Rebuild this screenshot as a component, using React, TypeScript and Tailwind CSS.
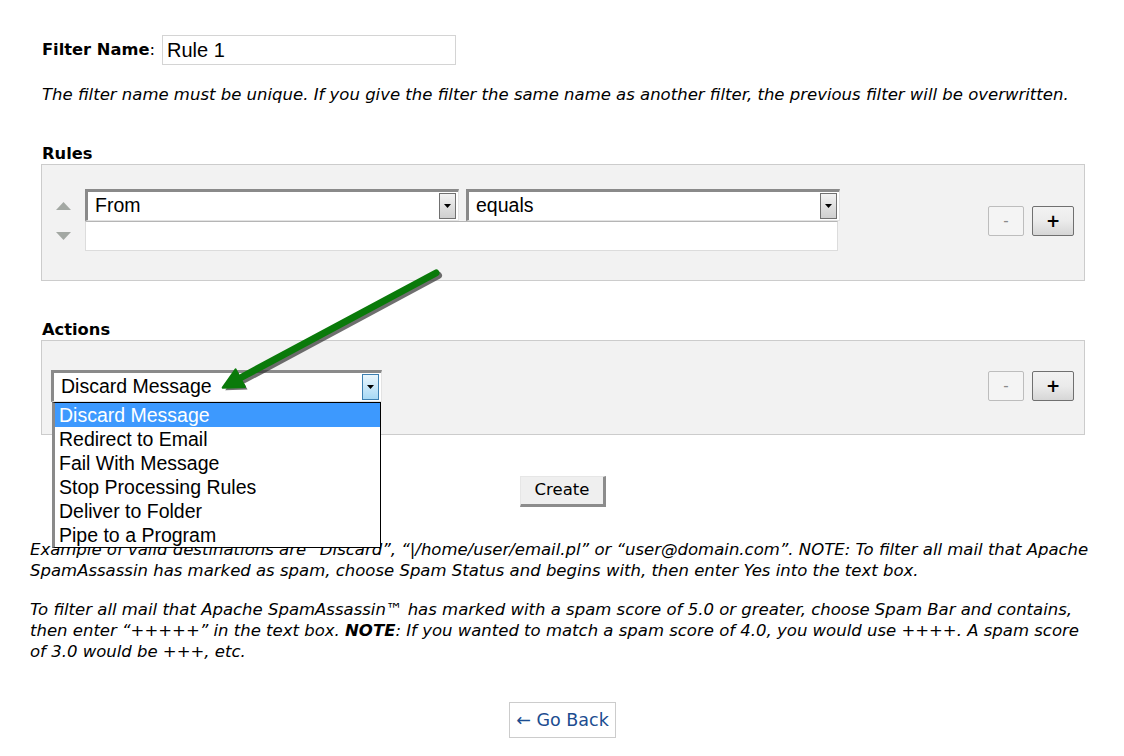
import React from 'react';

const verdana = { fontFamily: '"DejaVu Sans", Verdana, sans-serif' };
const arial = { fontFamily: '"Liberation Sans", Arial, sans-serif' };

function DropButton({ active }: { active?: boolean }) {
  return (
    <div
      className={
        active
          ? 'w-[17px] h-[26px] border border-[#3c7fb1] bg-gradient-to-b from-[#eaf6fd] to-[#a7d9f5] flex items-center justify-center'
          : 'w-[17px] h-[26px] border border-[#707070] bg-gradient-to-b from-[#f2f2f2] to-[#cfcfcf] flex items-center justify-center'
      }
    >
      <svg width="7" height="4" viewBox="0 0 7 4">
        <path d="M0 0 L7 0 L3.5 4 Z" fill="#000" />
      </svg>
    </div>
  );
}

function FakeSelect({ value, width, active }: { value: string; width: string; active?: boolean }) {
  return (
    <div
      className={`${width} h-[32px] bg-white border-t-[3px] border-l-[3px] border-r border-b border-t-[#8a8a8a] border-l-[#8a8a8a] border-r-[#e3e3e3] border-b-[#e3e3e3] flex items-center justify-between pl-[7px] pr-[2px]`}
    >
      <span className="text-[19.5px] text-black" style={arial}>
        {value}
      </span>
      <DropButton active={active} />
    </div>
  );
}

function PlusMinus() {
  return (
    <div className="flex gap-2">
      <button className="w-[36px] h-[30px] border border-[#bdbdbd] rounded-[2px] bg-[#f4f4f4] text-[#8a8a8a] text-[15px] leading-none">
        -
      </button>
      <button className="w-[42px] h-[30px] border border-[#707070] rounded-[2px] bg-gradient-to-b from-[#f2f2f2] via-[#ebebeb] to-[#d6d6d6] text-black text-[17px] font-bold leading-none">
        +
      </button>
    </div>
  );
}

export default function App() {
  const options = [
    'Discard Message',
    'Redirect to Email',
    'Fail With Message',
    'Stop Processing Rules',
    'Deliver to Folder',
    'Pipe to a Program',
  ];

  return (
    <div className="relative w-[1124px] h-[756px] bg-white text-[16.5px] text-black overflow-hidden" style={verdana}>
      <div className="pt-[35px] pl-[41px] w-[1085px]">
        <div className="flex items-center">
          <span className="font-bold ml-[1px] text-[16.3px]">Filter Name</span>
          <span>:</span>
          <div
            className="ml-[7px] w-[294px] h-[30px] border border-[#d4d4d4] bg-white flex items-center pl-[4px] text-[20px]"
            style={arial}
          >
            Rule 1
          </div>
        </div>

        <p className="mt-[19px] ml-[1px] italic leading-[21px]">
          The filter name must be unique. If you give the filter the same name as another filter, the previous filter will be overwritten.
        </p>

        <h3 className="mt-[38px] ml-[1px] font-bold leading-[21px] text-[16.3px]">Rules</h3>
        <div className="h-[117px] w-[1044px] bg-[#f2f2f2] border border-[#cccccc] flex items-start justify-between pt-[24px] pl-[13px] pr-[10px]">
          <div className="flex items-start">
            <div className="flex flex-col items-center w-[16px] mt-[13px] gap-[22px]">
              <svg width="15" height="8" viewBox="0 0 15 8">
                <path d="M0 8 L7.5 0 L15 8 Z" fill="#a3a8a3" />
              </svg>
              <svg width="15" height="8" viewBox="0 0 15 8">
                <path d="M0 0 L15 0 L7.5 8 Z" fill="#a3a8a3" />
              </svg>
            </div>
            <div className="ml-[14px] flex flex-col">
              <div className="flex gap-[7px]">
                <FakeSelect value="From" width="w-[374px]" />
                <FakeSelect value="equals" width="w-[374px]" />
              </div>
              <div className="w-[753px] h-[30px] bg-white border border-[#dcdcdc] border-t-[#b5b5b5]" />
            </div>
          </div>
          <div className="mt-[17px]">
            <PlusMinus />
          </div>
        </div>

        <h3 className="mt-[38px] ml-[1px] font-bold leading-[21px] text-[16.3px]">Actions</h3>
        <div className="relative h-[95px] w-[1044px] bg-[#f2f2f2] border border-[#cccccc] flex items-start justify-between pt-[29px] pl-[9px] pr-[10px]">
          <div className="relative">
            <FakeSelect value="Discard Message" width="w-[331px]" active />
            <div
              className="absolute left-[1px] top-[32px] w-[329px] bg-white border border-black border-l-[3px] border-l-[#8a8a8a] z-10"
              style={arial}
            >
              {options.map((o, i) => (
                <div
                  key={o}
                  className={
                    i === 0
                      ? 'h-[24px] leading-[25px] pl-[4px] text-[19.5px] bg-[#3d99fe] text-white'
                      : 'h-[24px] leading-[25px] pl-[4px] text-[19.5px] text-black'
                  }
                >
                  {o}
                </div>
              ))}
            </div>
          </div>
          <div className="mt-[1px]">
            <PlusMinus />
          </div>
        </div>
      </div>

      <div className="flex justify-center mt-[41px]">
        <button className="w-[86px] h-[31px] bg-[#efefef] border-t border-l border-t-[#e6e6e6] border-l-[#e6e6e6] border-r-[3px] border-b-[3px] border-r-[#8c8c8c] border-b-[#8c8c8c] text-[16.5px] ml-[2px]">
          Create
        </button>
      </div>

      <div className="pl-[30px] italic leading-[21px]">
        <p className="mt-[32px]">
          Example of valid destinations are “Discard”, “|/home/user/email.pl” or “user@domain.com”. NOTE: To filter all mail that Apache
          <br />
          SpamAssassin has marked as spam, choose Spam Status and begins with, then enter Yes into the text box.
        </p>
        <p className="mt-[18px]">
          To filter all mail that Apache SpamAssassin™ has marked with a spam score of 5.0 or greater, choose Spam Bar and contains,
          <br />
          then enter “+++++” in the text box. <b>NOTE</b>: If you wanted to match a spam score of 4.0, you would use ++++. A spam score
          <br />
          of 3.0 would be +++, etc.
        </p>
      </div>

      <div className="flex justify-center mt-[40px]">
        <button className="w-[107px] h-[36px] border border-[#cccccc] bg-white text-[#1c4d90] text-[17.5px] ml-[1px]">
          ← Go Back
        </button>
      </div>

      <svg className="absolute left-0 top-0 pointer-events-none z-20" width="1124" height="756" viewBox="0 0 1124 756">
        <g transform="translate(2.5,2.5)" opacity="0.7">
          <line x1="436" y1="273" x2="242" y2="377" stroke="#333" strokeWidth="7" strokeLinecap="round" />
          <path d="M222.7 387.7 L235.6 369.4 L245 387 Z" fill="#333" />
        </g>
        <line x1="436" y1="273" x2="242" y2="377" stroke="#0a7a0a" strokeWidth="7" strokeLinecap="round" />
        <path d="M222.7 387.7 L235.6 369.4 L245 387 Z" fill="#0a7a0a" stroke="#0a7a0a" strokeWidth="2" strokeLinejoin="round" />
      </svg>
    </div>
  );
}
